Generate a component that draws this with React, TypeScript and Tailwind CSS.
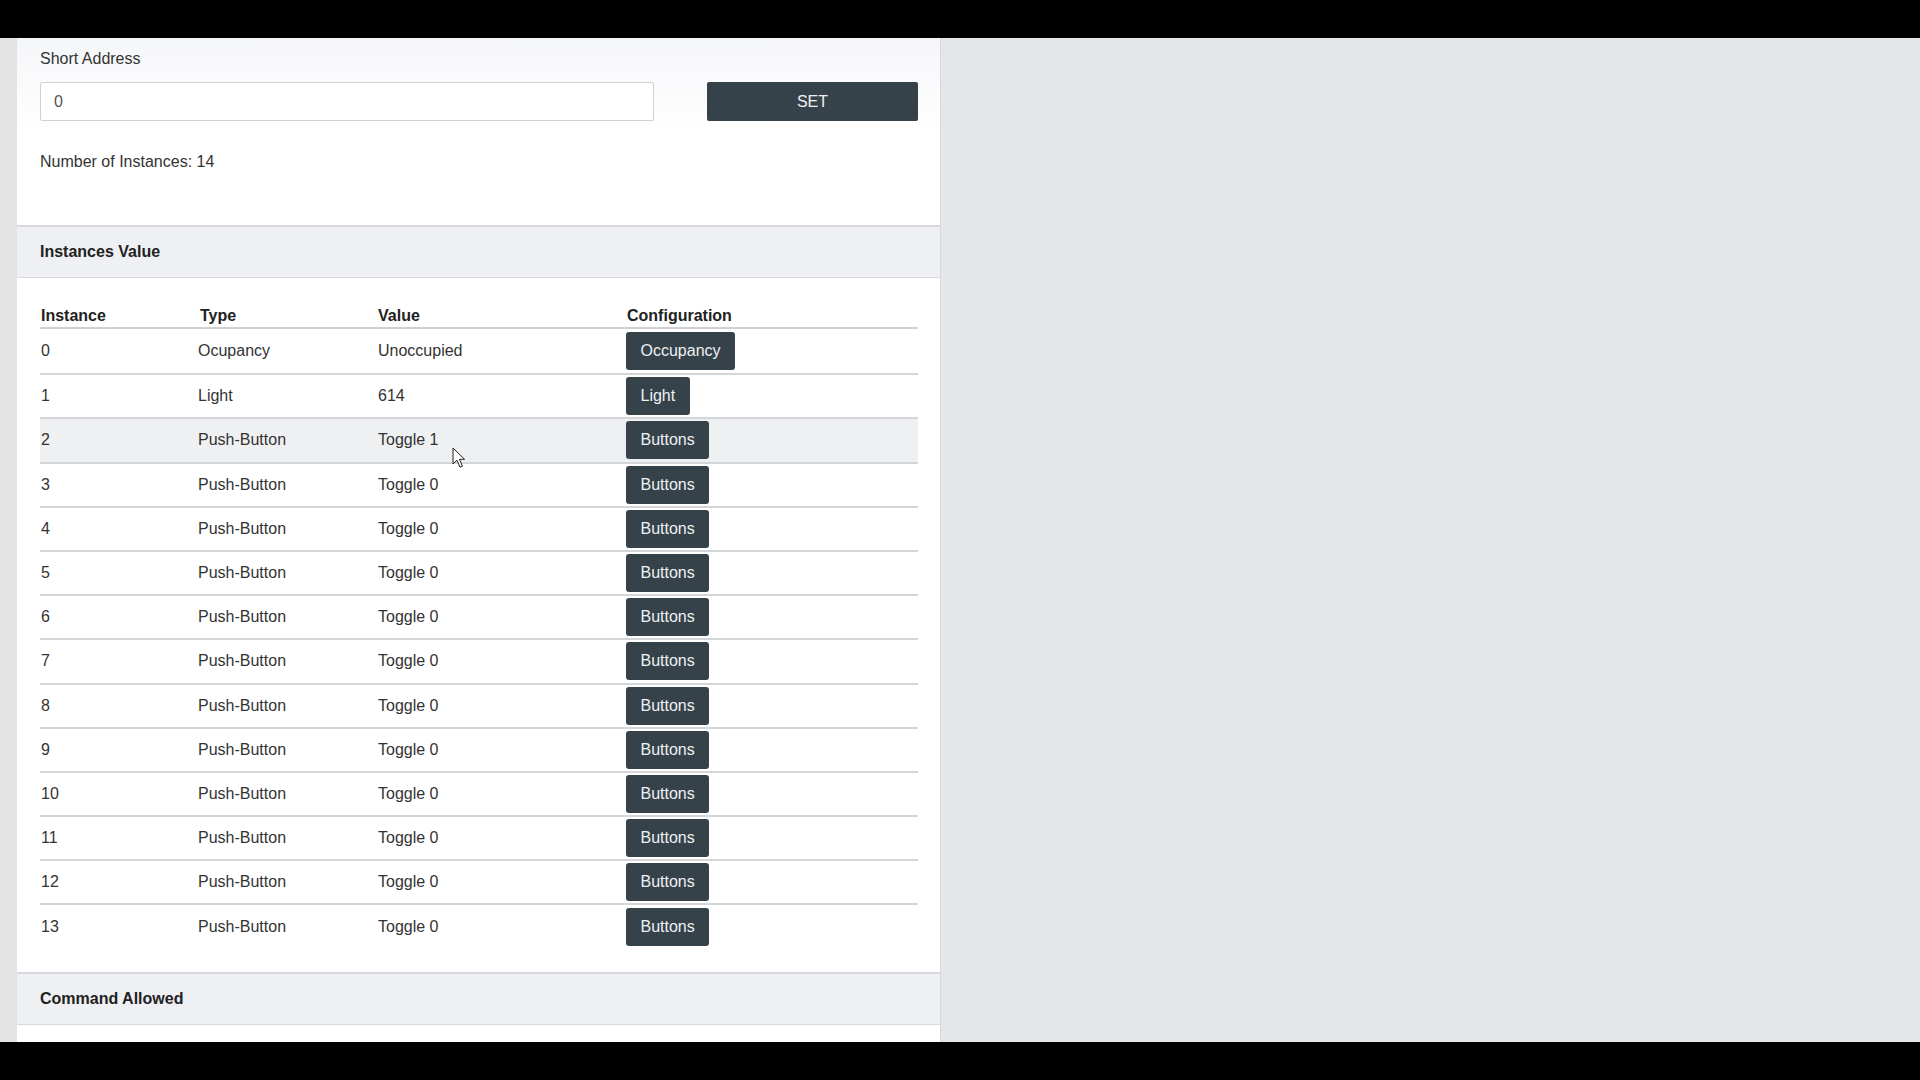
import React from "react";

const rows = [
  { id: "0", type: "Ocupancy", value: "Unoccupied", btn: "Occupancy" },
  { id: "1", type: "Light", value: "614", btn: "Light" },
  { id: "2", type: "Push-Button", value: "Toggle 1", btn: "Buttons" },
  ...Array.from({ length: 11 }, (_, i) => ({
    id: String(i + 3),
    type: "Push-Button",
    value: "Toggle 0",
    btn: "Buttons",
  })),
];

function Cursor() {
  return (
    <svg width="14" height="22" viewBox="0 0 14 22" className="absolute left-[452px] top-[447px]">
      <path d="M1 1 L1 17 L5 13.2 L8 20.2 L10.4 19.2 L7.5 12.3 L12.6 12.3 Z" fill="#fff" stroke="#222" strokeWidth="1" strokeLinejoin="round" />
    </svg>
  );
}

export default function App() {
  return (
    <div className="relative w-[1920px] h-[1080px] bg-black flex flex-col font-['Liberation_Sans',Arial,sans-serif] text-[16px] text-[#333]">
      <div className="h-[38px] shrink-0 bg-black" />

      <div className="h-[1004px] shrink-0 flex bg-[#e5e6e8] overflow-hidden">
        <div className="w-[17px] shrink-0 bg-[#e3e3e4]" />

        {/* Main panel */}
        <div className="w-[924px] shrink-0 bg-white flex flex-col border-r border-[#d9dadd]">
          {/* Short address */}
          <div className="h-[187px] shrink-0 pl-[23px] pr-[22px] pt-[12px] bg-linear-to-b from-[#f5f6f9] via-white to-white">
            <div className="leading-[18px] text-[#333]">Short Address</div>
            <div className="mt-[14px] flex items-center">
              <div className="w-[614px] h-[39px] border border-[#cfd1d4] rounded-[2px] bg-white flex items-center pl-[13px] text-[#555]">
                0
              </div>
              <button className="ml-auto w-[211px] h-[39px] rounded-[2px] bg-[#36424a] text-[#eef1f3] text-[16px]">
                SET
              </button>
            </div>
            <div className="mt-[32px] leading-[18px]">Number of Instances: 14</div>
          </div>

          {/* Instances value header */}
          <div className="h-[53px] shrink-0 border-t-2 border-b border-[#d6d8db] bg-[#eef0f3] flex items-center pl-[23px] font-bold text-[#222]">
            Instances Value
          </div>

          {/* Table */}
          <div className="pl-[23px] pr-[22px] pt-[29px] pb-[24px]">
            <div className="grid grid-cols-[158px_180px_248px_1fr] leading-[18px] pb-[2px] border-b-2 border-[#cfd1d4] font-bold text-[#222]">
              <div className="pl-[1px]">Instance</div>
              <div className="pl-[2px]">Type</div>
              <div>Value</div>
              <div className="pl-[1px]">Configuration</div>
            </div>
            {rows.map((r, i) => (
              <div
                key={r.id}
                className={`grid grid-cols-[158px_180px_248px_1fr] h-[44.2px] items-center ${
                  i > 0 ? "border-t-2 border-[#d3d5d8]" : ""
                } ${i === 2 ? "bg-[#eff0f2]" : ""}`}
              >
                <div className="pl-[1px]">{r.id}</div>
                <div>{r.type}</div>
                <div>{r.value}</div>
                <div className="flex">
                  <button className="h-[38px] px-[14.5px] rounded-[3px] bg-[#36424a] text-[#eef1f3] text-[16px]">
                    {r.btn}
                  </button>
                </div>
              </div>
            ))}
          </div>

          {/* Command allowed header */}
          <div className="h-[53px] shrink-0 border-t-2 border-b border-[#d6d8db] bg-[#eef0f3] flex items-center pl-[23px] font-bold text-[#222]">
            Command Allowed
          </div>
          <div className="flex-1" />
        </div>

        <div className="flex-1" />
      </div>

      <div className="flex-1 bg-black" />
      <Cursor />
    </div>
  );
}
